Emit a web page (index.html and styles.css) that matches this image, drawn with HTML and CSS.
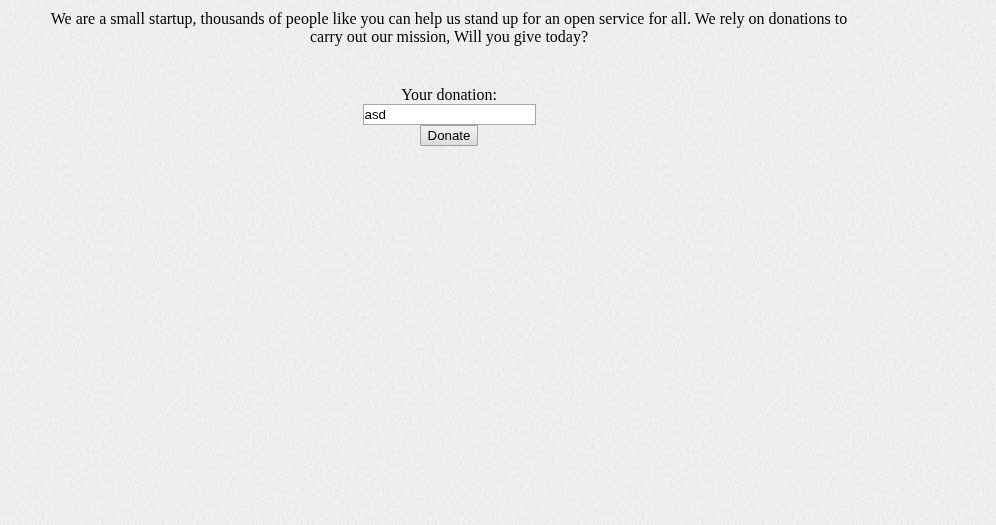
FILE: index.html
```html
<!DOCTYPE html>
<html lang="en">
<head>
<meta charset="utf-8">
<title>Donate</title>
<link rel="stylesheet" href="styles.css">
</head>
<body>
<svg class="paper" aria-hidden="true">
  <defs>
    <filter id="grain" x="0" y="0" width="100%" height="100%" color-interpolation-filters="sRGB">
      <feTurbulence type="fractalNoise" baseFrequency="0.4 0.25" numOctaves="2" seed="4" stitchTiles="stitch"/>
      <feColorMatrix values="0 0 0 0 0.5  0 0 0 0 0.5  0 0 0 0 0.5  0.16 0 0 0 -0.065"/>
    </filter>
    <pattern id="tile" width="150" height="150" patternUnits="userSpaceOnUse">
      <rect width="150" height="150" filter="url(#grain)"/>
    </pattern>
  </defs>
  <rect width="100%" height="100%" fill="url(#tile)"/>
</svg>
<main class="donation">
  <p class="appeal">We are a small startup, thousands of people like you can help us stand up for an open service for all. We rely on donations to carry out our mission, Will you give today?</p>
  <form class="form">
    <label class="label" for="amount">Your donation:</label>
    <input class="amount" id="amount" type="text" value="asd">
    <button class="donate" type="button">Donate</button>
  </form>
</main>
</body>
</html>
```
FILE: styles.css
```css
body {
  margin: 0;
  color: #000;
  font: 16px/18px "Liberation Serif", "Times New Roman", serif;
  background: repeating-linear-gradient(135deg, #f3f3f3 0, #f3f3f3 1.414px, #eee 1.414px, #eee 2.828px);
}

.paper {
  position: fixed;
  inset: 0;
  z-index: -1;
  width: 100%;
  height: 100%;
}

.donation {
  width: 800px;
  margin-left: 49px;
  padding-top: 10px;
  text-align: center;
}

.appeal {
  margin: 0 0 40px;
}

.form {
  display: flex;
  flex-direction: column;
  align-items: center;
}

.amount {
  box-sizing: border-box;
  width: 173px;
  height: 21px;
  margin: 0;
  padding: 1px;
  border: 1px solid #a6a6a6;
  border-radius: 0;
  background: #fff;
  color: #000;
  font: 13.333px "Liberation Sans", Arial, sans-serif;
}

.donate {
  box-sizing: border-box;
  width: 58px;
  height: 21px;
  margin: 0;
  padding: 0;
  border: 1px solid #a0a0a0;
  border-radius: 1px;
  background: linear-gradient(#f3f3f3, #dcdcdc);
  color: #000;
  font: 13.333px "Liberation Sans", Arial, sans-serif;
}
```
